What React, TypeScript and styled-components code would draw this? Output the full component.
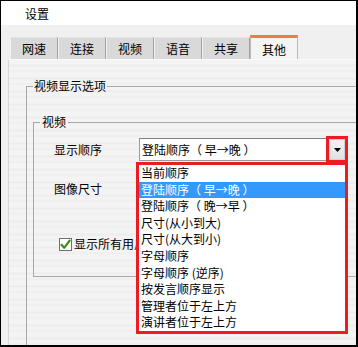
import React from 'react';
import styled, { createGlobalStyle } from 'styled-components';

const GlobalStyle = createGlobalStyle`
  html, body {
    margin: 0;
    padding: 0;
    background: #fff;
  }
  body {
    font-family: "Noto Sans CJK SC", "Noto Sans", sans-serif;
    font-size: 12px;
    color: #000;
  }
`;

const tabs = ['网速', '连接', '视频', '语音', '共享', '其他'];

const orderOptions = [
  '当前顺序',
  '登陆顺序（ 早→晚 ）',
  '登陆顺序（ 晚→早 ）',
  '尺寸(从小到大)',
  '尺寸(从大到小)',
  '字母顺序',
  '字母顺序 (逆序)',
  '按发言顺序显示',
  '管理者位于左上方',
  '演讲者位于左上方',
];

const App = () => {
  return (
    <>
      <GlobalStyle />
      <Window>
        <TitleBar>设置</TitleBar>
        <Body>
          <TabRow>
            {tabs.map((t) => (
              <Tab key={t} $active={t === '其他'}>
                {t}
              </Tab>
            ))}
          </TabRow>
          <Panel>
            <OuterGroup>
              <GroupLegend>视频显示选项</GroupLegend>
              <InnerGroup>
                <GroupLegend $pad={2}>视频</GroupLegend>
                <FormRow $top={9}>
                  <FieldLabel>显示顺序</FieldLabel>
                  <Combo>
                    <ComboText>{orderOptions[1]}</ComboText>
                    <DropButton $highlight>
                      <svg width="7" height="4" viewBox="0 0 7 4">
                        <path d="M0 0H7L3.5 4Z" fill="#000" />
                      </svg>
                    </DropButton>
                    <DropList>
                      {orderOptions.map((o, i) => (
                        <DropItem key={o} $selected={i === 1}>
                          {o}
                        </DropItem>
                      ))}
                    </DropList>
                  </Combo>
                </FormRow>
                <FormRow $top={16}>
                  <FieldLabel>图像尺寸</FieldLabel>
                  <Combo>
                    <ComboText>自动</ComboText>
                    <DropButton>
                      <svg width="7" height="4" viewBox="0 0 7 4">
                        <path d="M0 0H7L3.5 4Z" fill="#000" />
                      </svg>
                    </DropButton>
                  </Combo>
                </FormRow>
                <CheckRow>
                  <CheckBox>
                    <svg width="11" height="11" viewBox="0 0 11 11">
                      <path
                        d="M1.5 5.8L4.2 8.8L9.6 1.6"
                        fill="none"
                        stroke="#3c8c1c"
                        strokeWidth="2.2"
                        strokeLinecap="round"
                        strokeLinejoin="round"
                      />
                    </svg>
                  </CheckBox>
                  <CheckText>显示所有用户视频</CheckText>
                </CheckRow>
              </InnerGroup>
            </OuterGroup>
          </Panel>
        </Body>
      </Window>
    </>
  );
};

const Window = styled.div`
  width: 358px;
  height: 347px;
  box-sizing: border-box;
  border: 1px solid #000;
  border-right-width: 2px;
  border-bottom-width: 2px;
  display: flex;
  flex-direction: column;
  overflow: hidden;
  background: #f0f0f0;
`;

const TitleBar = styled.div`
  height: 24px;
  flex-shrink: 0;
  background: #fff;
  display: flex;
  align-items: center;
  padding-left: 24px;
  font-size: 12px;
`;

const Body = styled.div`
  flex: 1;
  display: flex;
  flex-direction: column;
  padding-top: 10px;
  min-height: 0;
`;

const TabRow = styled.div`
  height: 24px;
  flex-shrink: 0;
  display: flex;
  align-items: flex-end;
  padding-left: 9px;
`;

const Tab = styled.div<{ $active?: boolean }>`
  box-sizing: border-box;
  width: 48px;
  height: ${(p) => (p.$active ? '24px' : '22px')};
  display: flex;
  align-items: center;
  justify-content: center;
  padding-top: ${(p) => (p.$active ? '2px' : '0')};
  background: ${(p) => (p.$active ? '#f4f4f4' : '#d9d9d9')};
  border-left: 1px solid ${(p) => (p.$active ? '#b9b9b9' : '#f2f2f2')};
  border-right: 1px solid ${(p) => (p.$active ? '#b9b9b9' : '#a3a3a3')};
  border-top: ${(p) => (p.$active ? '3px solid #f47b3f' : '1px solid #e4e4e4')};
  font-size: 12px;
  line-height: 14px;
`;

const Panel = styled.div`
  flex: 1;
  margin-left: 7px;
  border-left: 1px solid #d6d6d6;
  border-top: 1px solid #fafafa;
  padding: 19px 0 0 17px;
  overflow: hidden;
  background: repeating-linear-gradient(
    180deg,
    #f4f4f4 0px,
    #f4f4f4 4px,
    #ebebeb 5px,
    #f2f2f2 7px,
    #f4f4f4 9px,
    #eeeeee 11px,
    #f4f4f4 13px
  );
`;

const OuterGroup = styled.fieldset`
  margin: 0;
  width: 420px;
  height: 300px;
  box-sizing: border-box;
  border: 1px solid #a9a9a9;
  padding: 0 0 0 6px;
`;

const GroupLegend = styled.legend<{ $pad?: number }>`
  padding: 0 ${(p) => p.$pad ?? 1}px;
  font-size: 12px;
  line-height: 14px;
`;

const InnerGroup = styled.fieldset`
  margin: 22px 0 0 0;
  width: 400px;
  box-sizing: border-box;
  border: 1px solid #a9a9a9;
  padding: 0 0 24px 6px;
`;

const FormRow = styled.div<{ $top: number }>`
  display: flex;
  align-items: center;
  margin-top: ${(p) => p.$top}px;
  padding-left: 14px;
  height: 23px;
`;

const FieldLabel = styled.div`
  width: 85px;
  flex-shrink: 0;
  line-height: 14px;
`;

const Combo = styled.div`
  position: relative;
  box-sizing: border-box;
  width: 208px;
  height: 23px;
  border: 1px solid #9b9b9b;
  border-top-color: #7f7f7f;
  background: #fff;
  display: flex;
  align-items: center;
`;

const ComboText = styled.div`
  padding-left: 2px;
  line-height: 14px;
  white-space: pre;
`;

const DropButton = styled.div<{ $highlight?: boolean }>`
  box-sizing: border-box;
  width: 16px;
  height: 21px;
  margin-left: auto;
  margin-right: 1px;
  background: linear-gradient(180deg, #f2f2f2, #e2e2e2);
  border: 1px solid #d0d0d0;
  display: flex;
  align-items: center;
  justify-content: center;
  outline: ${(p) => (p.$highlight ? '3px solid #ec1c24' : 'none')};
  position: relative;
  z-index: 2;
`;

const DropList = styled.div`
  position: absolute;
  top: calc(100% + 2px);
  left: -4px;
  width: 212px;
  box-sizing: border-box;
  border: 3px solid #ec1c24;
  background: #fff;
  z-index: 3;
`;

const DropItem = styled.div<{ $selected?: boolean }>`
  height: 16.6px;
  line-height: 16.6px;
  padding-left: 2px;
  white-space: pre;
  background: ${(p) => (p.$selected ? '#3399ff' : 'transparent')};
  color: ${(p) => (p.$selected ? '#fff' : '#000')};
`;

const CheckRow = styled.div`
  display: flex;
  align-items: center;
  gap: 2px;
  margin-top: 36px;
  padding-left: 19px;
  height: 16px;
`;

const CheckBox = styled.div`
  box-sizing: border-box;
  width: 13px;
  height: 13px;
  border: 1px solid #707070;
  background: #fff;
  display: flex;
  align-items: center;
  justify-content: center;
`;

const CheckText = styled.div`
  line-height: 14px;
  white-space: nowrap;
`;

export default App;
